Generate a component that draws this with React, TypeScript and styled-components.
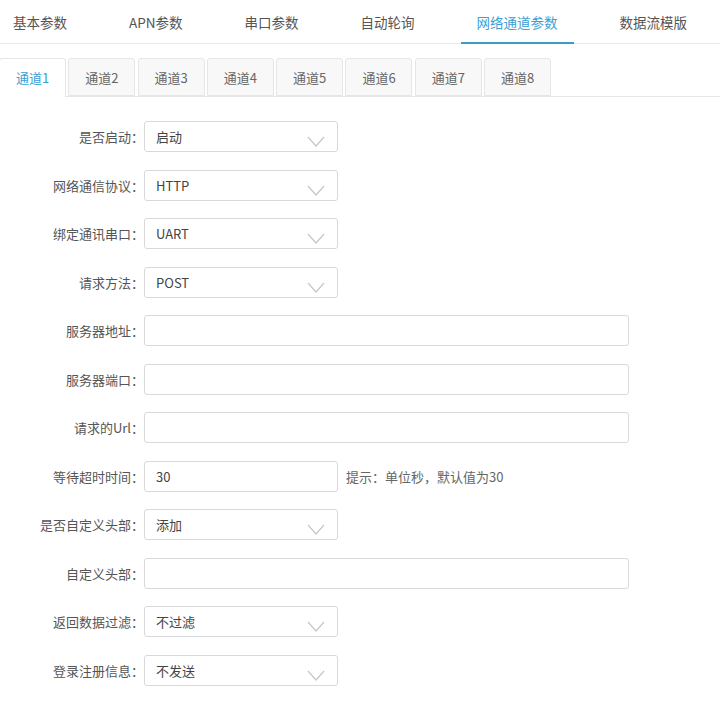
import React, { useState } from 'react';
import styled, { createGlobalStyle } from 'styled-components';

const GlobalStyle = createGlobalStyle`
  html, body {
    margin: 0;
    padding: 0;
    background: #fff;
  }
  body {
    font-family: 'Noto Sans CJK SC', 'Microsoft YaHei', sans-serif;
    color: #555;
  }
`;

const Page = styled.div`
  width: 720px;
  height: 721px;
  overflow: hidden;
  background: #fff;
`;

const MainTabs = styled.ul`
  display: flex;
  gap: 30px;
  margin: 0 0 0 -3px;
  padding: 0;
  list-style: none;
  height: 43px;
  border-bottom: 1px solid #eaeaea;
`;

const MainTab = styled.li<{ $active?: boolean }>`
  position: relative;
  padding: 0 16px;
  line-height: 44px;
  font-size: 13.5px;
  white-space: nowrap;
  color: ${({ $active }) => ($active ? '#3a9fd6' : '#555')};
  cursor: pointer;

  &::after {
    content: '';
    display: ${({ $active }) => ($active ? 'block' : 'none')};
    position: absolute;
    left: 0;
    right: 0;
    bottom: -1px;
    height: 2px;
    background: #3b9dc2;
  }
`;

const SubTabs = styled.ul`
  display: flex;
  gap: 2.3px;
  margin: 14px 0 0 -1px;
  padding: 0;
  list-style: none;
  border-bottom: 1px solid #e6e6e6;
  height: 38px;
`;

const SubTab = styled.li<{ $active?: boolean }>`
  width: 67px;
  height: ${({ $active }) => ($active ? '39px' : '38px')};
  box-sizing: border-box;
  border: 1px solid #e6e6e6;
  border-bottom: ${({ $active }) => ($active ? 'none' : '1px solid #e6e6e6')};
  border-radius: 3px 3px 0 0;
  background: ${({ $active }) => ($active ? '#fff' : '#f8f8f8')};
  color: ${({ $active }) => ($active ? '#3a9fd6' : '#666')};
  font-size: 13px;
  line-height: 37px;
  text-align: center;
  cursor: pointer;
`;

const Form = styled.form`
  padding-top: 24px;
`;

const Row = styled.div`
  display: flex;
  align-items: center;
  height: 31px;
  margin-bottom: 17.5px;
`;

const Label = styled.label`
  width: 144px;
  flex: none;
  text-align: right;
  font-size: 13px;
  color: #555;
  white-space: nowrap;
`;

const Box = styled.div<{ $wide?: boolean }>`
  position: relative;
  width: ${({ $wide }) => ($wide ? '485px' : '194px')};
  height: 31px;
  box-sizing: border-box;
  border: 1px solid #d9d9d9;
  border-radius: 3px;
  background: #fff;
  padding: 0 11px;
  display: flex;
  align-items: center;
  font-size: 13px;
  color: #444;
`;

const Input = styled.input`
  border: none;
  outline: none;
  padding: 0;
  width: 100%;
  font: inherit;
  color: inherit;
  background: transparent;
`;

const Arrow = styled.svg`
  position: absolute;
  right: 12px;
  top: 14px;
`;

const Hint = styled.span`
  margin-left: 8px;
  font-size: 13px;
  color: #666;
`;

const mainTabs = ['基本参数', 'APN参数', '串口参数', '自动轮询', '网络通道参数', '数据流模版'];
const channels = ['通道1', '通道2', '通道3', '通道4', '通道5', '通道6', '通道7', '通道8'];

type Field = { label: string; value: string; kind: 'select' | 'input'; wide?: boolean; hint?: string };

const fields: Field[] = [
  { label: '是否启动：', value: '启动', kind: 'select' },
  { label: '网络通信协议：', value: 'HTTP', kind: 'select' },
  { label: '绑定通讯串口：', value: 'UART', kind: 'select' },
  { label: '请求方法：', value: 'POST', kind: 'select' },
  { label: '服务器地址：', value: '', kind: 'input', wide: true },
  { label: '服务器端口：', value: '', kind: 'input', wide: true },
  { label: '请求的Url：', value: '', kind: 'input', wide: true },
  { label: '等待超时时间：', value: '30', kind: 'input', hint: '提示：单位秒，默认值为30' },
  { label: '是否自定义头部：', value: '添加', kind: 'select' },
  { label: '自定义头部：', value: '', kind: 'input', wide: true },
  { label: '返回数据过滤：', value: '不过滤', kind: 'select' },
  { label: '登录注册信息：', value: '不发送', kind: 'select' },
];

const Chevron = () => (
  <Arrow width="18" height="11" viewBox="0 0 18 11">
    <path d="M1 1 L9 10 L17 1" fill="none" stroke="#c6c6c6" strokeWidth="1.2" />
  </Arrow>
);

const App: React.FC = () => {
  const [tab, setTab] = useState(4);
  const [channel, setChannel] = useState(0);

  return (
    <Page>
      <GlobalStyle />
      <MainTabs>
        {mainTabs.map((t, i) => (
          <MainTab key={t} $active={i === tab} onClick={() => setTab(i)}>
            {t}
          </MainTab>
        ))}
      </MainTabs>
      <SubTabs>
        {channels.map((c, i) => (
          <SubTab key={c} $active={i === channel} onClick={() => setChannel(i)}>
            {c}
          </SubTab>
        ))}
      </SubTabs>
      <Form onSubmit={(e) => e.preventDefault()}>
        {fields.map((f) => (
          <Row key={f.label}>
            <Label>{f.label}</Label>
            <Box $wide={f.wide}>
              {f.kind === 'select' ? (
                <>
                  {f.value}
                  <Chevron />
                </>
              ) : (
                <Input defaultValue={f.value} />
              )}
            </Box>
            {f.hint && <Hint>{f.hint}</Hint>}
          </Row>
        ))}
      </Form>
    </Page>
  );
};

export default App;
